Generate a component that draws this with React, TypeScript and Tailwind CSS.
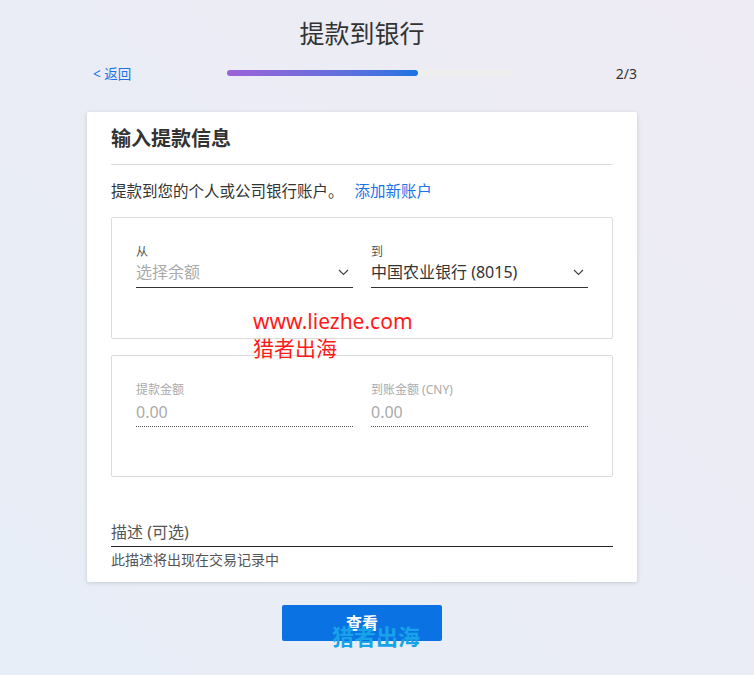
import React from "react";

const font = { fontFamily: '"Noto Sans", "Noto Sans CJK SC", sans-serif' };

function Chevron() {
  return (
    <svg width="11" height="7" viewBox="0 0 11 7" className="text-[#444]">
      <path d="M1 1 L5.5 5.5 L10 1" fill="none" stroke="currentColor" strokeWidth="1.2" />
    </svg>
  );
}

export default function App() {
  return (
    <div
      className="relative w-[754px] h-[675px] overflow-hidden bg-linear-to-tr from-[#e7eef7] to-[#eeebf4] text-[#333]"
      style={font}
    >
      <div className="ml-[87px] w-[550px] pt-[16px]">
        <h1 className="text-center text-[25px] leading-[34px] text-[#333]">提款到银行</h1>
        <div className="mt-[13px] flex items-center h-[20px]">
          <div className="w-[140px] pl-[6px]">
            <a className="text-[13.5px] text-[#1a73e8] leading-[20px]">&lt; 返回</a>
          </div>
          <div className="w-[286px] h-[6px] rounded-full bg-[#eeeeec]">
            <div className="h-[6px] w-[191px] rounded-full bg-linear-to-r from-[#9b62d8] to-[#1673e2]" />
          </div>
          <div className="flex-1 text-right text-[14px] text-[#333]">2/3</div>
        </div>

        <div className="mt-[29px] bg-white rounded-[2px] shadow-[0_1px_4px_rgba(0,0,0,0.15)] px-[24px] pt-[13px] pb-[12px]">
          <h2 className="text-[20px] leading-[28px] font-bold text-[#333]">输入提款信息</h2>
          <div className="mt-[11px] h-px bg-[#dcdcdc]" />
          <p className="mt-[15px] text-[15.5px] leading-[22px] text-[#333]">
            提款到您的个人或公司银行账户。 <span className="ml-[7px] text-[#1a73e8]">添加新账户</span>
          </p>

          <div className="mt-[15px] h-[122px] border border-[#dcdcdc] rounded-[2px] px-[24px] pt-[26px]">
            <div className="flex gap-[18px]">
              <div className="w-[217px]">
                <div className="text-[12px] leading-[16px] text-[#555]">从</div>
                <div className="mt-[1px] h-[27px] border-b border-[#333] flex items-center justify-between pr-[4px] pb-[4px]">
                  <span className="text-[16px] leading-[22px] text-[#aaa]">选择余额</span>
                  <Chevron />
                </div>
              </div>
              <div className="w-[217px]">
                <div className="text-[12px] leading-[16px] text-[#555]">到</div>
                <div className="mt-[1px] h-[27px] border-b border-[#333] flex items-center justify-between pr-[4px] pb-[4px]">
                  <span className="text-[16px] leading-[22px] text-[#333]">中国农业银行 (8015)</span>
                  <Chevron />
                </div>
              </div>
            </div>
          </div>

          <div className="mt-[16px] h-[122px] border border-[#dcdcdc] rounded-[2px] px-[24px] pt-[26px]">
            <div className="flex gap-[18px]">
              <div className="w-[217px]">
                <div className="text-[12px] leading-[16px] text-[#aaa]">提款金额</div>
                <div className="mt-[2px] h-[27px] border-b border-dotted border-[#555]">
                  <span className="text-[16px] leading-[22px] text-[#aaa]">0.00</span>
                </div>
              </div>
              <div className="w-[217px]">
                <div className="text-[12px] leading-[16px] text-[#aaa]">到账金额 (CNY)</div>
                <div className="mt-[2px] h-[27px] border-b border-dotted border-[#555]">
                  <span className="text-[16px] leading-[22px] text-[#aaa]">0.00</span>
                </div>
              </div>
            </div>
          </div>

          <div className="mt-[44px] h-[26px] border-b border-[#222] text-[16px] leading-[22px] text-[#555]">描述 (可选)</div>
          <div className="mt-[3px] text-[14px] leading-[20px] text-[#555]">此描述将出现在交易记录中</div>
        </div>

        <div className="mt-[23px] flex justify-center">
          <button className="w-[160px] h-[36px] rounded-[2px] bg-[#0b72e3] text-white text-[16px] font-bold">查看</button>
        </div>
      </div>

      <div className="absolute left-[253px] top-[308px] text-[21px] leading-[27px] text-[#ff1a1a]">
        <div>www.liezhe.com</div>
        <div>猎者出海</div>
      </div>
      <div className="absolute left-[332px] top-[622px] text-[22px] leading-[28px] font-bold text-[#17a3e8]">猎者出海</div>
    </div>
  );
}
